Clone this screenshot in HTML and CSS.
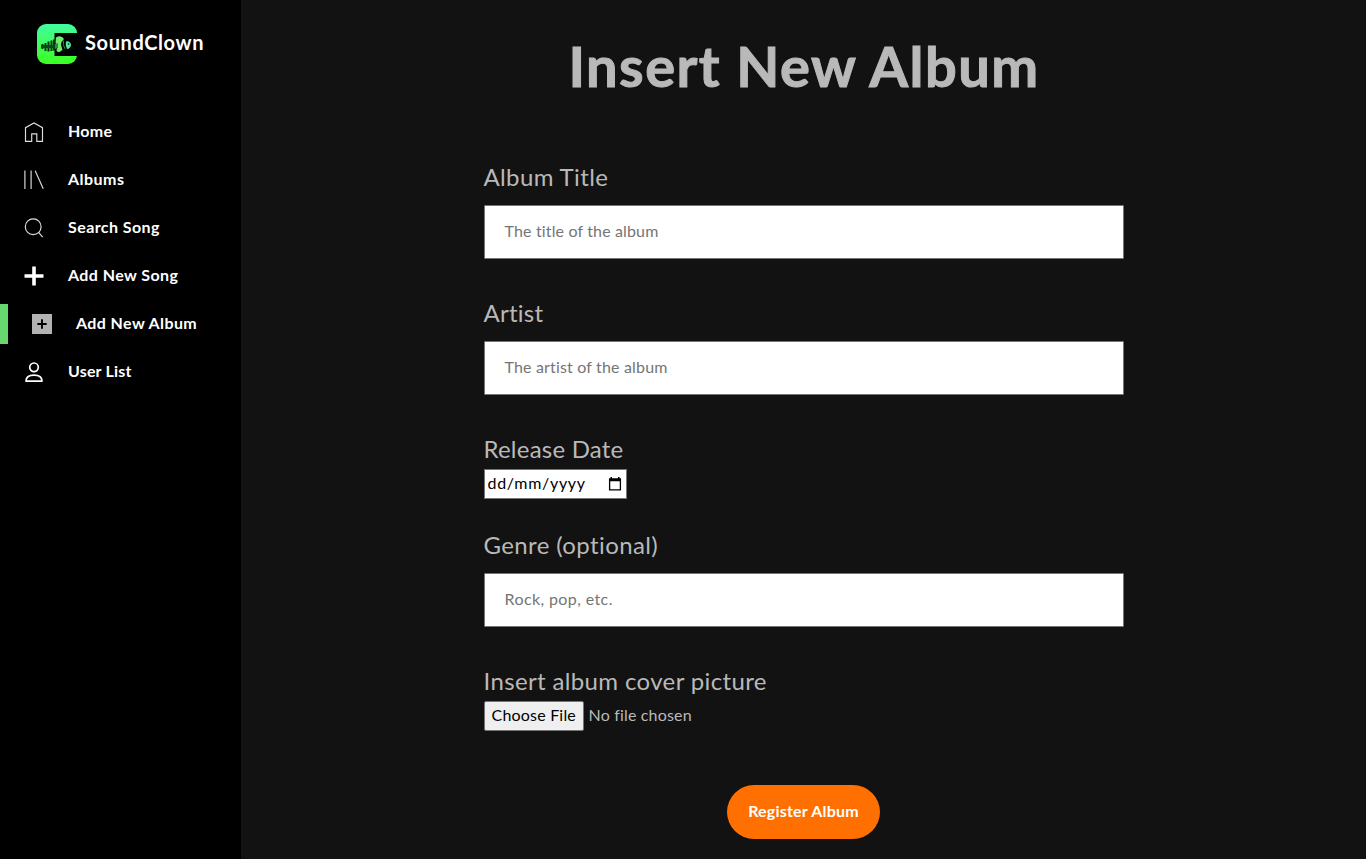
FILE: index.html
```html
<!DOCTYPE html>
<html lang="en">
<head>
<meta charset="utf-8">
<title>SoundClown</title>
<link rel="stylesheet" href="styles.css">
</head>
<body>
<div class="app">
  <nav class="sidebar">
    <a class="brand">
      <svg class="logo" width="40" height="40" viewBox="0 0 40 40">
        <defs>
          <linearGradient id="lg" x1="0" y1="0" x2="0" y2="1"><stop offset="0" stop-color="#43fca0"/><stop offset="1" stop-color="#3bff1f"/></linearGradient>
        </defs>
        <rect width="40" height="40" rx="9" fill="url(#lg)"/>
        <path d="M17.500 9h22.500v23H17.500z"/>
        <path d="M5.500 20v5M8.500 19v8M11.500 17.500v10M14.500 16.500v10.500M17 15.500v11" stroke="#04340f" stroke-width="2"/>
        <path d="M4 22.500h14" stroke="#0b4a18" stroke-width="3"/>
        <path d="M19 13.500q5-3 8 1.500l-2.500 3-.5 3 1.500 5-3 2q-3 0-3-2l1.500-4-2.500-3z" fill="#6dee6c"/>
        <path d="M18 20l3-1v5l-3 1z" fill="#2c8a3c"/>
        <path d="M26.500 16.500q-1 4 1.500 8.500" fill="none" stroke="#2d8f45" stroke-width="1"/>
        <path d="M29 17.500q4-1 5 3.500-1 4-4 4-2-4-1-7.500z" fill="#4af0a0"/>
        <circle cx="31.500" cy="20" r=".8"/>
      </svg>
      <span class="brand-name t-brand">SoundClown</span>
    </a>
    <ul class="menu">
      <li class="item"><svg class="icon" viewBox="0 0 20 20" fill="none" stroke="#ddd" stroke-width="1.150"><path d="M1.500 19.300V5.700L10 1l8.500 4.700v13.600h-5.700v-7.500H7.700v7.500z"/></svg><span class="t-home">Home</span></li>
      <li class="item"><svg class="icon" viewBox="0 0 20 20" fill="none" stroke="#ddd" stroke-width="1.150"><path d="M.9 .5v18.500M7.100 .5v18.500M11.200 .8l8 18"/></svg><span class="t-albums">Albums</span></li>
      <li class="item"><svg class="icon" viewBox="0 0 20 20" fill="none" stroke="#ddd" stroke-width="1.150"><circle cx="9.200" cy="8.700" r="7.900"/><path d="M14.600 14.400l4 4.800"/></svg><span class="t-search">Search Song</span></li>
      <li class="item"><svg class="icon" viewBox="0 0 20 20" fill="none" stroke="#fff" stroke-width="3.600"><path d="M10 .5v19M.5 10h19"/></svg><span class="t-song">Add New Song</span></li>
      <li class="item active"><svg class="icon" viewBox="0 0 20 20"><path d="M0 0h20v20H0z" fill="#b3b3b3"/><path d="M10 5.300v9.400M5.300 10h9.400" stroke="#000" stroke-width="1.900"/></svg><span class="t-album">Add New Album</span></li>
      <li class="item"><svg class="icon" viewBox="0 0 20 20" fill="none" stroke="#fff" stroke-width="1.700"><circle cx="10" cy="5.300" r="4.300"/><path d="M2 19.100c0-4 3-6 8-6s8 2 8 6z" stroke-linejoin="round"/></svg><span class="t-user">User List</span></li>
    </ul>
  </nav>
  <main class="content">
    <h1 class="title"><span class="t-title">Insert New Album</span></h1>
    <form class="form">
      <div class="field"><label class="label"><span class="t-l1">Album Title</span></label><div class="box"><span class="t-p1">The title of the album</span></div></div>
      <div class="field"><label class="label"><span class="t-l2">Artist</span></label><div class="box"><span class="t-p2">The artist of the album</span></div></div>
      <div class="field compact"><label class="label"><span class="t-l3">Release Date</span></label>
        <div class="date"><span class="t-date">dd/mm/yyyy</span><svg width="14" height="16" viewBox="0 0 14 16"><path d="M1.600 3.200v10.600h10.800V3.200z" fill="none" stroke="#000" stroke-width="1.300"/><path d="M1 2.500h12v2.700H1zM2.500 1H4v2H2.500zM10 1h1.500v2H10z"/></svg></div></div>
      <div class="field"><label class="label"><span class="t-l4">Genre (optional)</span></label><div class="box"><span class="t-p3">Rock, pop, etc.</span></div></div>
      <div class="field compact"><label class="label"><span class="t-l5">Insert album cover picture</span></label>
        <div class="file"><span class="choose"><span class="t-choose">Choose File</span></span><span class="t-none">No file chosen</span></div></div>
      <button class="submit" type="button"><span class="t-reg">Register Album</span></button>
    </form>
  </main>
</div>
</body>
</html>
```
FILE: styles.css
```css
* { box-sizing: border-box; }
body { margin: 0; background: #121212; font-family: Lato, "Liberation Sans", sans-serif; font-size: 16px; color: #b9b9b9; }
.app { display: flex; height: 859px; overflow: hidden; }
.sidebar { width: 241px; flex: none; background: #000; color: #fff; font-weight: 700; }
.brand { display: flex; align-items: center; gap: 8px; padding: 24px 0 0 37px; }
.brand-name { font-size: 20px; line-height: 36px; padding-bottom: 4px; }
.logo, .icon { display: block; flex: none; }
.menu { list-style: none; margin: 48px 0 0; padding: 0; display: grid; gap: 8px; }
.item { display: flex; align-items: center; height: 40px; padding-left: 24px; gap: 24px; line-height: 20px; }
.item span { padding-bottom: 3px; }
.icon { width: 20px; height: 20px; }
.active { border-left: 8px solid #69d76f; }
.content { flex: 1; display: flex; flex-direction: column; align-items: center; }
.title { margin: 0; padding-top: 31px; font-size: 56px; line-height: 70px; white-space: nowrap; -webkit-text-stroke: 1px #b9b9b9; }
.form { width: 640px; padding-top: 60px; display: flex; flex-direction: column; }
.field { height: 136px; }
.compact { height: 96px; }
.label { display: block; height: 44px; font-size: 24px; line-height: 32px; white-space: nowrap; }
.compact .label { height: 36px; }
.box { height: 54px; border: 1px solid #767676; background: #fff; color: #757575; padding-left: 20px; line-height: 49px; border-radius: 1px; }
.date { width: 143px; height: 30px; border: 1px solid #767676; background: #fff; color: #000; display: flex; justify-content: space-between; align-items: center; padding: 0 4px 0 3px; line-height: 26px; }
.t-date { padding-bottom: 2px; }
.file { display: flex; align-items: center; gap: 5px; height: 30px; white-space: nowrap; }
.choose { width: 100px; height: 30px; border: 1px solid #767676; border-radius: 2px; background: #efefef; color: #000; padding-left: 7px; line-height: 26px; }
.submit { align-self: center; margin: 24px 0 0; width: 153px; height: 54px; border: 0; border-radius: 27px; background: #ff7000; color: #fff; font: 700 16px Lato, "Liberation Sans", sans-serif; padding: 0 0 3px; white-space: nowrap; }

/* Tracking per label */
.t-brand { letter-spacing: .6px; }
.t-home { letter-spacing: .25px; }
.t-albums { letter-spacing: .48px; }
.t-search, .t-song { letter-spacing: .42px; }
.t-album { letter-spacing: .4px; }
.t-user { letter-spacing: .17px; }
.t-title { letter-spacing: 1.45px; margin-right: -1px; }
.t-l1 { letter-spacing: .37px; }
.t-l2 { letter-spacing: .25px; }
.t-l3 { letter-spacing: .22px; }
.t-l4 { letter-spacing: .38px; }
.t-l5 { letter-spacing: .36px; }
.t-p1 { letter-spacing: .15px; }
.t-p2 { letter-spacing: .17px; }
.t-p3 { letter-spacing: .4px; }
.t-date { letter-spacing: .7px; }
.t-choose { letter-spacing: .2px; }
.t-none { letter-spacing: .17px; padding-bottom: 3px; }
.t-reg { letter-spacing: .2px; }
```
